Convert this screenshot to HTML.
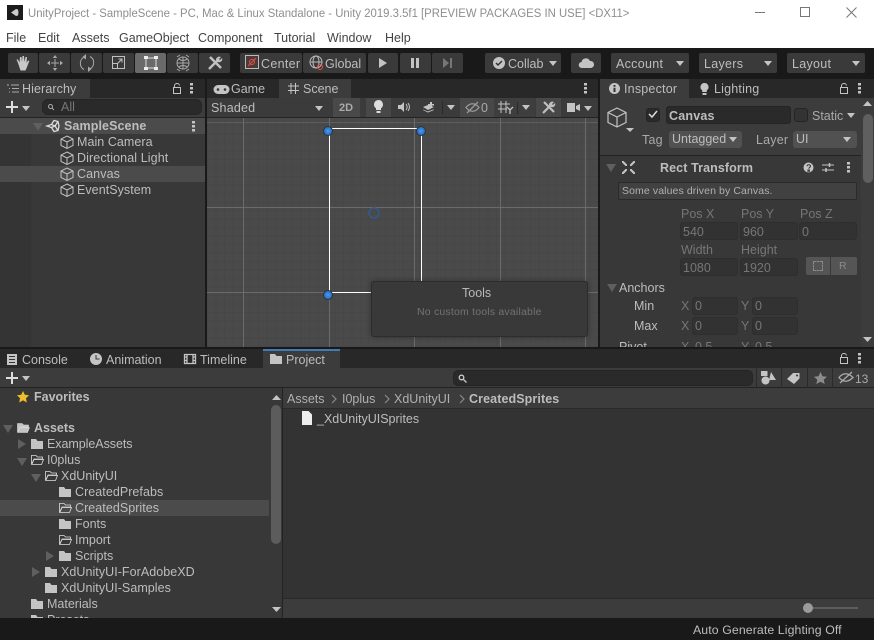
<!DOCTYPE html>
<html><head><meta charset="utf-8"><style>
*{box-sizing:border-box}
html,body{margin:0;padding:0;background:#191919}
body{width:874px;height:640px;position:relative;overflow:hidden;font-family:"Liberation Sans",sans-serif;font-size:12.5px;color:#bdbdbd}
.a{position:absolute}
.t{position:absolute;white-space:nowrap;line-height:16px;height:16px}
.b{font-weight:bold}
.btn{position:absolute;background:#3a3a3a;height:20px;top:53px;border-radius:2px}
.f{position:absolute;background:#2a2a2a;border-radius:3px;border:1px solid #252525}
.d{background:#323232;border-color:#2e2e2e}
.tri{position:absolute;width:0;height:0;border-left:4px solid transparent;border-right:4px solid transparent;border-top:5px solid #c4c4c4}
.trid{position:absolute;width:0;height:0;border-left:5px solid transparent;border-right:5px solid transparent;border-top:8px solid #5f5f5f}
.trir{position:absolute;width:0;height:0;border-top:5px solid transparent;border-bottom:5px solid transparent;border-left:8px solid #5f5f5f}
svg{position:absolute;overflow:visible}
.g{position:absolute;background:#6b6b6b}
.dis{color:#767676}
</style></head><body>
<!-- title bar -->
<div class="a" style="left:0;top:0;width:874px;height:48px;background:#fff"></div>
<div class="a" style="left:7px;top:5px;width:16px;height:15px;background:#1c1c1c"></div>
<svg style="left:7px;top:5px" width="16" height="15"><path d="M4 7.500 9 4l2 .5.500 3-.5 3L9 11z" fill="#ccc"/></svg>
<div class="t" style="left:28px;top:5px;color:#8e8e8e;font-size:12.3px;transform:scaleX(.923);transform-origin:0 50%">UnityProject - SampleScene - PC, Mac &amp; Linux Standalone - Unity 2019.3.5f1 [PREVIEW PACKAGES IN USE] &lt;DX11&gt;</div>
<div class="a" style="left:755px;top:12px;width:10px;height:1px;background:#777"></div>
<div class="a" style="left:800px;top:7px;width:10px;height:10px;border:1px solid #777"></div>
<svg style="left:846px;top:7px" width="11" height="11"><path d="M.5.500l10 10M10.500.5l-10 10" stroke="#777" fill="none"/></svg>
<div class="t" style="left:6px;top:30px;color:#444">File</div>
<div class="t" style="left:38px;top:30px;color:#444">Edit</div>
<div class="t" style="left:72px;top:30px;color:#444">Assets</div>
<div class="t" style="left:119px;top:30px;color:#444">GameObject</div>
<div class="t" style="left:198px;top:30px;color:#444">Component</div>
<div class="t" style="left:274px;top:30px;color:#444">Tutorial</div>
<div class="t" style="left:327px;top:30px;color:#444">Window</div>
<div class="t" style="left:385px;top:30px;color:#444">Help</div>
<!-- toolbar -->
<div class="btn" style="left:8px;width:30px"></div>
<div class="btn" style="left:39px;width:31px"></div>
<div class="btn" style="left:71px;width:31px"></div>
<div class="btn" style="left:103px;width:31px"></div>
<div class="btn" style="left:135px;width:31px;background:#6a6a6a"></div>
<div class="btn" style="left:167px;width:31px"></div>
<div class="btn" style="left:199px;width:31px"></div>
<svg style="left:14px;top:55px" width="18" height="16"><path d="M4 8 2.500 4.500l1.500 0 1.500 3L6 2h1.500l.5 5 .5-6H10l.5 6 1-5H13l-.5 6 1.500-2.500 1.300.5-2.300 6-1.500 3.500H6.500z" fill="#c8c8c8"/></svg>
<svg style="left:47px;top:55px" width="16" height="16" stroke="#a8a8a8" fill="none"><path d="M8 4v8M4 8h8"/><path d="M8 0 5.800 3h4.400zM8 16l-2.200-3h4.400zM0 8l3-2.200v4.400zM16 8l-3-2.200v4.400z" fill="#a8a8a8" stroke="none"/></svg>
<svg style="left:79px;top:54px" width="16" height="18" stroke="#a8a8a8" fill="none"><path d="M6 2.500C0 5 0 13 5 15.500M10 15.500C16 13 16 5 11 2.500"/><path d="M7 0v5.500L3.500 3zM9 18v-5.500l3.500 2.500z" fill="#a8a8a8" stroke="none"/></svg>
<svg style="left:111px;top:55px" width="16" height="16" stroke="#c0c0c0" fill="none"><rect x="1.500" y="1.500" width="12" height="12"/><rect x="1.500" y="8.500" width="5" height="5"/><path d="M6 9l5-5M7.500 4H11v3.500"/></svg>
<svg style="left:143px;top:55px" width="16" height="16"><rect x="3" y="3" width="10" height="10" stroke="#ddd" fill="none"/><path d="M1 1h4v3H1zM11 1h4v3h-4zM1 12h4v3H1zM11 12h4v3h-4z" fill="#eee"/></svg>
<svg style="left:175px;top:54px" width="16" height="18" stroke="#a8a8a8" fill="none"><circle cx="8" cy="9" r="6"/><path d="M2 9h12M8 3v12M4 5c2 2 6 2 8 0M4 13c2-2 6-2 8 0"/><path d="M2 3 5 1M14 3l-3-2M2 15l3 2M14 15l-3 2"/></svg>
<svg style="left:207px;top:55px" width="16" height="16"><path d="M2 14 11 5M3 2l11 11" stroke="#c0c0c0" stroke-width="2.500" fill="none"/><path d="M9 5c0-3 3-4 5-3l-2 2 1 1 2-2c1 2-1 5-4 4z" fill="#c0c0c0"/></svg>
<div class="btn" style="left:240px;width:62px"></div>
<div class="btn" style="left:303px;width:63px"></div>
<svg style="left:245px;top:55px" width="15" height="15"><rect x=".5" y=".5" width="13" height="13" stroke="#bbb" fill="#4a3a3a"/><path d="M3 11 11 3" stroke="#e35040" fill="none"/><circle cx="7" cy="7" r="2.500" stroke="#e35040" fill="none"/></svg>
<div class="t" style="left:261px;top:56px;letter-spacing:.3px">Center</div>
<svg style="left:309px;top:55px" width="16" height="16" stroke="#bbb" fill="none"><circle cx="7" cy="7" r="6"/><ellipse cx="7" cy="7" rx="3" ry="6"/><path d="M1 7h12"/><circle cx="11" cy="12" r="2.500" stroke="#e35040"/></svg>
<div class="t" style="left:325px;top:56px">Global</div>
<div class="btn" style="left:368px;width:30px"></div>
<div class="btn" style="left:400px;width:31px"></div>
<div class="btn" style="left:432px;width:31px"></div>
<svg style="left:378px;top:57px" width="10" height="12"><path d="M1 1v10l8-5z" fill="#c4c4c4"/></svg>
<div class="a" style="left:411px;top:58px;width:3px;height:10px;background:#c4c4c4"></div>
<div class="a" style="left:416px;top:58px;width:3px;height:10px;background:#c4c4c4"></div>
<svg style="left:442px;top:58px" width="11" height="10"><path d="M1 0v10l6-5z M8 0h2v10H8z" fill="#777"/></svg>
<div class="btn" style="left:485px;width:76px"></div>
<svg style="left:493px;top:57px" width="12" height="12"><circle cx="6" cy="6" r="6" fill="#c4c4c4"/><path d="M3 6l2 2 4-4" stroke="#333" stroke-width="1.500" fill="none"/></svg>
<div class="t" style="left:508px;top:56px">Collab</div>
<div class="tri" style="left:549px;top:61px"></div>
<div class="btn" style="left:571px;width:30px"></div>
<svg style="left:579px;top:57px" width="15" height="11"><path d="M3 11a3 3 0 0 1-.5-6A4.500 4.500 0 0 1 11 4a3.500 3.500 0 0 1 1 7z" fill="#c4c4c4"/></svg>
<div class="btn" style="left:611px;width:78px"></div>
<div class="t" style="left:616px;top:56px;letter-spacing:.3px">Account</div>
<div class="tri" style="left:676px;top:61px"></div>
<div class="btn" style="left:699px;width:78px"></div>
<div class="t" style="left:704px;top:56px;letter-spacing:.3px">Layers</div>
<div class="tri" style="left:764px;top:61px"></div>
<div class="btn" style="left:787px;width:78px"></div>
<div class="t" style="left:792px;top:56px;letter-spacing:.3px">Layout</div>
<div class="tri" style="left:852px;top:61px"></div>

<!-- Hierarchy -->
<div class="a" style="left:0;top:79px;width:205px;height:268px;background:#383838"></div>
<div class="a" style="left:0;top:79px;width:205px;height:19px;background:#282828"></div>
<div class="a" style="left:0;top:79px;width:90px;height:19px;background:#3c3c3c"></div>
<svg style="left:7px;top:84px" width="12" height="10" stroke="#aaa" fill="none"><path d="M0 1h2M4 1h8M2 4.500h1M5 4.500h7M2 8h1M5 8h7"/></svg>
<div class="t" style="left:22px;top:81px;letter-spacing:.1px">Hierarchy</div>
<svg style="left:172px;top:83px" width="10" height="11" stroke="#c4c4c4" fill="none"><rect x="1.500" y="4.500" width="7" height="6"/><path d="M2.500 4.500V2.500a2.500 2 0 0 1 5 0"/></svg>
<svg style="left:190px;top:83px" width="3" height="10"><path d="M0 0h3v2.500H0zM0 4h3v2.500H0zM0 8h3v2.500H0z" fill="#c4c4c4"/></svg>
<div class="a" style="left:0;top:98px;width:205px;height:20px;background:#3c3c3c;border-bottom:1px solid #232323"></div>
<svg style="left:6px;top:101px" width="12" height="12"><path d="M5 0h2v5h5v2H7v5H5V7H0V5h5z" fill="#ddd"/></svg>
<div class="tri" style="left:22px;top:106px"></div>
<div class="f" style="left:42px;top:99px;width:160px;height:16px;border-radius:6px"></div>
<svg style="left:47px;top:103px" width="10" height="9" stroke="#aaa" fill="none"><circle cx="3.500" cy="3.500" r="2"/><path d="M5 5l2 2"/></svg>
<div class="t dis" style="left:61px;top:99px">All</div>
<div class="a" style="left:0;top:134px;width:31px;height:213px;background:#343434"></div>
<div class="a" style="left:0;top:118px;width:205px;height:16px;background:#4b4b4b"></div>
<div class="a" style="left:0;top:166px;width:205px;height:16px;background:#4b4b4b"></div>
<div class="trid" style="left:33px;top:123px"></div>
<svg style="left:46px;top:119px" width="14" height="14" stroke="#ddd" fill="none" stroke-width="1.300"><path d="M1 7l4.500-1.500L8 1.500 12 2.500l1 4.500-1 4.500-4 1L5.500 8.500zM5.500 5.500 9 7l-3.500 1.500M9 7l3-4.500M9 7l3 4.500"/></svg>
<div class="t b" style="left:64px;top:118px;letter-spacing:.1px">SampleScene</div>
<svg style="left:192px;top:121px" width="3" height="10"><path d="M0 0h3v2.500H0zM0 4h3v2.500H0zM0 8h3v2.500H0z" fill="#c4c4c4"/></svg>
<svg style="left:60px;top:135px" width="14" height="14" stroke="#c4c4c4" fill="none"><path d="M7 1 13 4v6.500L7 13.500 1 10.500V4zM1 4l6 3 6-3M7 7v6.500"/></svg>
<svg style="left:60px;top:151px" width="14" height="14" stroke="#c4c4c4" fill="none"><path d="M7 1 13 4v6.500L7 13.500 1 10.500V4zM1 4l6 3 6-3M7 7v6.500"/></svg>
<svg style="left:60px;top:167px" width="14" height="14" stroke="#c4c4c4" fill="none"><path d="M7 1 13 4v6.500L7 13.500 1 10.500V4zM1 4l6 3 6-3M7 7v6.500"/></svg>
<svg style="left:60px;top:183px" width="14" height="14" stroke="#c4c4c4" fill="none"><path d="M7 1 13 4v6.500L7 13.500 1 10.500V4zM1 4l6 3 6-3M7 7v6.500"/></svg>
<div class="t" style="left:77px;top:134px;letter-spacing:.05px">Main Camera</div>
<div class="t" style="left:77px;top:150px;letter-spacing:.1px">Directional Light</div>
<div class="t" style="left:77px;top:166px;letter-spacing:.1px">Canvas</div>
<div class="t" style="left:77px;top:182px;letter-spacing:.05px">EventSystem</div>

<!-- Scene tabs -->
<div class="a" style="left:207px;top:79px;width:391px;height:19px;background:#282828"></div>
<div class="a" style="left:279px;top:79px;width:72px;height:19px;background:#3c3c3c"></div>
<svg style="left:214px;top:85px" width="15" height="9"><path d="M4 0h7a4 4 0 0 1 0 9H4a4 4 0 0 1 0-9z" fill="#c4c4c4"/><circle cx="4" cy="4.500" r="1.300" fill="#333"/><circle cx="11" cy="4.500" r="1.300" fill="#333"/></svg>
<div class="t" style="left:231px;top:81px">Game</div>
<svg style="left:288px;top:83px" width="11" height="11" stroke="#c4c4c4" fill="none"><path d="M3 0v11M7.500 0v11M0 3h11M0 7.500h11"/></svg>
<div class="t" style="left:303px;top:81px">Scene</div>
<svg style="left:584px;top:83px" width="3" height="10"><path d="M0 0h3v2.500H0zM0 4h3v2.500H0zM0 8h3v2.500H0z" fill="#c4c4c4"/></svg>
<div class="a" style="left:207px;top:98px;width:391px;height:20px;background:#3b3b3b;border-bottom:1px solid #232323"></div>
<div class="t" style="left:211px;top:100px;letter-spacing:.2px">Shaded</div>
<div class="tri" style="left:315px;top:106px"></div>
<div class="a" style="left:333px;top:98px;width:27px;height:19px;background:#494949"></div>
<div class="t b" style="left:339px;top:100px;font-size:11px;color:#aaa">2D</div>
<div class="a" style="left:366px;top:98px;width:25px;height:19px;background:#484848"></div>
<svg style="left:373px;top:100px" width="11" height="14"><path d="M5.500 0a4.500 4.500 0 0 1 2.500 8.200V10H3V8.200A4.500 4.500 0 0 1 5.500 0zM3.500 11h4v2h-4z" fill="#ddd"/></svg>
<svg style="left:398px;top:102px" width="13" height="10" fill="#c4c4c4"><path d="M0 3h3l3-3v10L3 7H0z"/><path d="M8 2c1.500 2 1.500 4 0 6M10 1c2 3 2 5 0 8" stroke="#c4c4c4" fill="none"/></svg>
<svg style="left:422px;top:102px" width="13" height="11" fill="#c4c4c4"><path d="M1 5l5-2 6 2-6 3zM1 8l5 2.500 6-2.500-1-.5-5 2-5-2z"/><path d="M8 0h2v2h2v1.500h-2V5H8V3.500H6V2h2z"/></svg>
<div class="a" style="left:442px;top:101px;width:1px;height:13px;background:#2a2a2a"></div>
<div class="tri" style="left:447px;top:105px"></div>
<div class="a" style="left:460px;top:98px;width:34px;height:19px;background:#484848"></div>
<svg style="left:465px;top:101px" width="15" height="13" stroke="#999" fill="none"><path d="M1 6.500C5 1.500 10 1.500 14 6.500 10 11.500 5 11.500 1 6.500zM2 12 13 1" stroke-width="1.300"/></svg>
<div class="t" style="left:481px;top:100px;color:#aaa">0</div>
<div class="a" style="left:494px;top:98px;width:41px;height:19px;background:#3e3e3e"></div>
<svg style="left:498px;top:101px" width="17" height="14" stroke="#c4c4c4" fill="none"><path d="M3 0v12M8 0v12M0 3h12M0 8h9"/><path d="M9 6l3 3 3-3M12 9v4" stroke-width="1.300"/></svg>
<div class="a" style="left:517px;top:102px;width:1px;height:12px;background:#2a2a2a"></div>
<div class="tri" style="left:522px;top:105px"></div>
<div class="a" style="left:536px;top:98px;width:25px;height:19px;background:#484848"></div>
<svg style="left:541px;top:100px" width="15" height="15"><path d="M2 13 10 5M3 2l10 10" stroke="#c0c0c0" stroke-width="2.200" fill="none"/><path d="M8 5c0-3 3-4 5-3l-2 2 1 1 2-2c1 2-1 5-4 4z" fill="#c0c0c0"/></svg>
<svg style="left:567px;top:103px" width="13" height="9"><path d="M0 0h8v9H0zM9 3l4-2v7L9 6z" fill="#c4c4c4"/></svg>
<div class="tri" style="left:584px;top:106px"></div>

<!-- Scene view -->
<div class="a" style="left:207px;top:118px;width:391px;height:229px;background-color:#4a4a4a;background-image:repeating-linear-gradient(90deg,#474747 0 1px,transparent 1px 8.5px),repeating-linear-gradient(0deg,#474747 0 1px,transparent 1px 8.5px)"></div>
<div class="g" style="left:207px;top:122px;width:391px;height:1px;background:#5d5d5d"></div>
<div class="g" style="left:207px;top:207px;width:391px;height:1px"></div>
<div class="g" style="left:207px;top:292px;width:391px;height:1px"></div>
<div class="g" style="left:243px;top:118px;width:1px;height:229px"></div>
<div class="g" style="left:329px;top:118px;width:1px;height:229px"></div>
<div class="g" style="left:414px;top:118px;width:1px;height:229px"></div>
<div class="g" style="left:500px;top:118px;width:1px;height:229px"></div>
<div class="g" style="left:585px;top:118px;width:1px;height:229px"></div>
<div class="a" style="left:329px;top:128px;width:93px;height:165px;border:1px solid #fff"></div>
<svg style="left:321px;top:124px" width="110" height="178"><defs><radialGradient id="h"><stop offset="0" stop-color="#4a9cf0"/><stop offset="1" stop-color="#1f68c0"/></radialGradient></defs>
<circle cx="7" cy="7" r="4.500" fill="url(#h)" stroke="#333"/><circle cx="100" cy="7" r="4.500" fill="url(#h)" stroke="#333"/><circle cx="7" cy="171" r="4.500" fill="url(#h)" stroke="#333"/></svg>
<svg style="left:367px;top:206px" width="14" height="14"><circle cx="7" cy="7" r="5" stroke="#34598a" stroke-width="1.600" fill="none"/></svg>
<div class="a" style="left:371px;top:281px;width:217px;height:56px;background:#393939;border:1px solid #2c2c2c;border-radius:3px;box-shadow:0 0 6px rgba(0,0,0,.3)"></div>
<div class="t" style="left:462px;top:285px;color:#b8b8b8">Tools</div>
<div class="t" style="left:417px;top:304px;font-size:10.500px;color:#737373;letter-spacing:.2px">No custom tools available</div>

<!-- Inspector -->
<div class="a" style="left:600px;top:79px;width:274px;height:268px;background:#383838"></div>
<div class="a" style="left:600px;top:79px;width:274px;height:19px;background:#282828"></div>
<div class="a" style="left:600px;top:79px;width:89px;height:19px;background:#3c3c3c"></div>
<svg style="left:609px;top:83px" width="11" height="11"><circle cx="5.500" cy="5.500" r="5.500" fill="#c4c4c4"/><path d="M4.500 2h2v1.800h-2zM4.500 4.800h2V9h-2z" fill="#333"/></svg>
<div class="t" style="left:624px;top:81px;letter-spacing:.2px">Inspector</div>
<svg style="left:700px;top:83px" width="9" height="12"><path d="M4.500 0a4 4 0 0 1 2.300 7.300V9H2.200V7.300A4 4 0 0 1 4.500 0zM2.500 10h4v2h-4z" fill="#c4c4c4"/></svg>
<div class="t" style="left:714px;top:81px;letter-spacing:.2px">Lighting</div>
<svg style="left:839px;top:83px" width="10" height="11" stroke="#c4c4c4" fill="none"><rect x="1.500" y="4.500" width="7" height="6"/><path d="M2.500 4.500V2.500a2.500 2 0 0 1 5 0"/></svg>
<svg style="left:858px;top:83px" width="3" height="10"><path d="M0 0h3v2.500H0zM0 4h3v2.500H0zM0 8h3v2.500H0z" fill="#c4c4c4"/></svg>
<div class="a" style="left:600px;top:98px;width:261px;height:58px;background:#3c3c3c;border-bottom:1px solid #232323"></div>
<svg style="left:607px;top:107px" width="22" height="24" stroke="#c4c4c4" stroke-width="1.200" fill="none"><path d="M10 1 19 5.500v10L10 20 1 15.500v-10zM1 5.500l9 4.500 9-4.500M10 10v10"/></svg>
<div class="tri" style="left:626px;top:128px;border-width:4px 4px 0;border-top-color:#c4c4c4"></div>
<div class="f" style="left:646px;top:108px;width:14px;height:14px"></div>
<svg style="left:648px;top:110px" width="10" height="9"><path d="M1 4l3 3 5-6" stroke="#ddd" stroke-width="1.500" fill="none"/></svg>
<div class="f" style="left:666px;top:106px;width:125px;height:18px"></div>
<div class="t b" style="left:669px;top:108px;letter-spacing:.2px">Canvas</div>
<div class="f" style="left:794px;top:108px;width:14px;height:14px;background:#333"></div>
<div class="t" style="left:812px;top:108px;color:#aaa">Static</div>
<div class="tri" style="left:847px;top:113px"></div>
<div class="t" style="left:642px;top:132px;color:#aaa;letter-spacing:.2px">Tag</div>
<div class="a" style="left:669px;top:131px;width:73px;height:17px;background:#515151;border-radius:3px"></div>
<div class="t" style="left:672px;top:131px">Untagged</div>
<div class="tri" style="left:729px;top:137px"></div>
<div class="t" style="left:756px;top:132px;color:#aaa;letter-spacing:.2px">Layer</div>
<div class="a" style="left:793px;top:131px;width:64px;height:17px;background:#515151;border-radius:3px"></div>
<div class="t" style="left:796px;top:131px">UI</div>
<div class="tri" style="left:843px;top:137px"></div>
<div class="trid" style="left:606px;top:164px"></div>
<svg style="left:622px;top:161px" width="13" height="13"><path d="M0 0l1.500 0 3.500 3.500V5H3.500L0 1.500zM13 0h-1.500L8 3.500V5h1.500L13 1.500zM0 13h1.500L5 9.500V8H3.500L0 11.500zM13 13h-1.500L8 9.500V8h1.500L13 11.500z" fill="#c4c4c4"/></svg>
<div class="t b" style="left:660px;top:160px;letter-spacing:.1px">Rect Transform</div>
<svg style="left:803px;top:162px" width="11" height="11"><circle cx="5.500" cy="5.500" r="5" fill="#c4c4c4"/><path d="M4 4.200c0-2 3.500-2 3.500 0 0 1.300-1.700 1.200-1.700 2.500M4.900 8h1.500v1.300H4.900z" stroke="#333" fill="none"/></svg>
<svg style="left:822px;top:162px" width="12" height="11" stroke="#c4c4c4" fill="none"><path d="M0 3h12M0 8h12"/><path d="M7.500 1v4M4 6v4" stroke-width="1.500"/></svg>
<svg style="left:847px;top:162px" width="3" height="10"><path d="M0 0h3v2.500H0zM0 4h3v2.500H0zM0 8h3v2.500H0z" fill="#c4c4c4"/></svg>
<div class="a" style="left:618px;top:182px;width:239px;height:18px;background:#414141;border:1px solid #2a2a2a;border-radius:2px"></div>
<div class="t" style="left:622px;top:183px;font-size:10.500px;color:#b0b0b0;letter-spacing:.1px">Some values driven by Canvas.</div>
<div class="t dis" style="left:681px;top:206px">Pos X</div>
<div class="t dis" style="left:741px;top:206px">Pos Y</div>
<div class="t dis" style="left:800px;top:206px">Pos Z</div>
<div class="f d" style="left:680px;top:222px;width:58px;height:18px"></div>
<div class="f d" style="left:740px;top:222px;width:58px;height:18px"></div>
<div class="f d" style="left:799px;top:222px;width:58px;height:18px"></div>
<div class="t dis" style="left:683px;top:224px">540</div>
<div class="t dis" style="left:743px;top:224px">960</div>
<div class="t dis" style="left:802px;top:224px">0</div>
<div class="t dis" style="left:681px;top:242px">Width</div>
<div class="t dis" style="left:741px;top:242px">Height</div>
<div class="f d" style="left:680px;top:258px;width:58px;height:18px"></div>
<div class="f d" style="left:740px;top:258px;width:58px;height:18px"></div>
<div class="t dis" style="left:683px;top:260px">1080</div>
<div class="t dis" style="left:743px;top:260px">1920</div>
<div class="a" style="left:806px;top:257px;width:24px;height:18px;background:#555;border-radius:2px 0 0 2px"></div>
<div class="a" style="left:813px;top:261px;width:10px;height:10px;border:1px dashed #8a8a8a"></div>
<div class="a" style="left:831px;top:257px;width:26px;height:18px;background:#555;border-radius:0 2px 2px 0"></div>
<div class="t" style="left:839px;top:258px;font-size:10.500px;color:#8a8a8a">R</div>
<div class="trid" style="left:607px;top:284px"></div>
<div class="t" style="left:619px;top:280px">Anchors</div>
<div class="t" style="left:634px;top:298px">Min</div>
<div class="t" style="left:634px;top:318px">Max</div>
<div class="t dis" style="left:681px;top:298px">X</div><div class="t dis" style="left:741px;top:298px">Y</div>
<div class="t dis" style="left:681px;top:318px">X</div><div class="t dis" style="left:741px;top:318px">Y</div>
<div class="f d" style="left:692px;top:297px;width:46px;height:18px"></div>
<div class="f d" style="left:752px;top:297px;width:46px;height:18px"></div>
<div class="f d" style="left:692px;top:317px;width:46px;height:18px"></div>
<div class="f d" style="left:752px;top:317px;width:46px;height:18px"></div>
<div class="t dis" style="left:695px;top:298px">0</div><div class="t dis" style="left:755px;top:298px">0</div>
<div class="t dis" style="left:695px;top:318px">0</div><div class="t dis" style="left:755px;top:318px">0</div>
<div class="a" style="left:600px;top:339px;width:261px;height:8px;overflow:hidden">
<div class="t" style="left:19px;top:0">Pivot</div>
<div class="t dis" style="left:81px;top:0">X</div><div class="t dis" style="left:95px;top:0">0.5</div><div class="t dis" style="left:141px;top:0">Y</div><div class="t dis" style="left:155px;top:0">0.5</div>
</div>
<div class="a" style="left:861px;top:98px;width:13px;height:249px;background:#3c3c3c"></div>
<svg style="left:863px;top:101px" width="9" height="5"><path d="M0 5l4.500-5L9 5z" fill="#c4c4c4"/></svg>
<svg style="left:863px;top:337px" width="9" height="5"><path d="M0 0l4.500 5L9 0z" fill="#c4c4c4"/></svg>
<div class="a" style="left:863px;top:114px;width:10px;height:69px;background:#5f5f5f;border-radius:5px"></div>

<!-- Bottom panel -->
<div class="a" style="left:0;top:349px;width:874px;height:269px;background:#383838"></div>
<div class="a" style="left:0;top:349px;width:874px;height:19px;background:#282828"></div>
<div class="a" style="left:263px;top:349px;width:77px;height:19px;background:#3c3c3c;border-top:2px solid #3f7cb6"></div>
<svg style="left:7px;top:354px" width="10" height="11"><path d="M0 0h10v11H0z" fill="#c4c4c4"/><path d="M2 2.500h6M2 5.500h6M2 8.500h6" stroke="#333"/></svg>
<div class="t" style="left:22px;top:352px">Console</div>
<svg style="left:90px;top:353px" width="12" height="12"><circle cx="6" cy="6" r="6" fill="#c4c4c4"/><path d="M6 2v4h3.500" stroke="#333" fill="none"/></svg>
<div class="t" style="left:106px;top:352px">Animation</div>
<svg style="left:184px;top:354px" width="12" height="10" stroke="#c4c4c4" fill="none" stroke-width="1.300"><path d="M.5.500h11v9H.5zM3 .5v9M9 .5v9M.5 3H3M.5 6.500H3M9 3h2.500M9 6.500h2.500"/></svg>
<div class="t" style="left:200px;top:352px">Timeline</div>
<svg style="left:270px;top:354px" width="12" height="10"><path d="M0 0h5l1.500 2H12v8H0z" fill="#c4c4c4"/></svg>
<div class="t" style="left:286px;top:352px">Project</div>
<svg style="left:839px;top:353px" width="10" height="11" stroke="#c4c4c4" fill="none"><rect x="1.500" y="4.500" width="7" height="6"/><path d="M2.500 4.500V2.500a2.500 2 0 0 1 5 0"/></svg>
<svg style="left:858px;top:353px" width="3" height="10"><path d="M0 0h3v2.500H0zM0 4h3v2.500H0zM0 8h3v2.500H0z" fill="#c4c4c4"/></svg>
<div class="a" style="left:0;top:368px;width:874px;height:20px;background:#3c3c3c;border-bottom:1px solid #232323"></div>
<svg style="left:6px;top:372px" width="12" height="12"><path d="M5 0h2v5h5v2H7v5H5V7H0V5h5z" fill="#ddd"/></svg>
<div class="tri" style="left:22px;top:376px"></div>
<div class="f" style="left:453px;top:370px;width:300px;height:16px;border-radius:5px"></div>
<svg style="left:458px;top:374px" width="9" height="9" stroke="#ccc" fill="none" stroke-width="1.300"><circle cx="3.500" cy="3.500" r="2.300"/><path d="M5.500 5.500l3 3"/></svg>
<div class="a" style="left:756px;top:368px;width:1px;height:20px;background:#2a2a2a"></div>
<div class="a" style="left:781px;top:368px;width:1px;height:20px;background:#2a2a2a"></div>
<div class="a" style="left:807px;top:368px;width:1px;height:20px;background:#2a2a2a"></div>
<div class="a" style="left:832px;top:368px;width:1px;height:20px;background:#2a2a2a"></div>
<svg style="left:761px;top:371px" width="15" height="14"><circle cx="4.500" cy="9.500" r="4" fill="#c4c4c4"/><path d="M0 0h6.500v5H0zM10 1l5 8H8z" fill="#c4c4c4"/></svg>
<svg style="left:787px;top:372px" width="14" height="12"><path d="M0 7 6 1h6.500v5.500L7 12z" fill="#c4c4c4"/><circle cx="10" cy="3.500" r="1" fill="#333"/></svg>
<svg style="left:814px;top:372px" width="13" height="12"><path d="M6.500 0l2 4.200 4.500.5-3.300 3 1 4.300-4.200-2.300L2.300 12l1-4.300L0 4.700l4.500-.5z" fill="#8c8c8c"/></svg>
<svg style="left:838px;top:371px" width="16" height="13" stroke="#aaa" fill="none"><path d="M1 6.500C5 1.500 10 1.500 15 6.500 10 11.500 5 11.500 1 6.500zM2 12 14 1" stroke-width="1.300"/></svg>
<div class="t" style="left:855px;top:371px;color:#aaa;font-size:12px">13</div>

<!-- Project tree -->
<svg style="left:17px;top:391px" width="12" height="12"><path d="M6 0l1.800 3.800 4.200.5-3 2.900.8 4.300L6 9.400 2.200 11.500 3 7.200 0 4.300l4.200-.5z" fill="#eebd2b"/></svg>
<div class="t b" style="left:34px;top:389px">Favorites</div>
<div class="trid" style="left:3px;top:425px"></div>
<div class="t b" style="left:34px;top:420px">Assets</div>
<div class="a" style="left:0;top:500px;width:269px;height:16px;background:#4b4b4b"></div>
<svg style="left:17px;top:423px" width="13" height="10"><path d="M.5.500h4.500l1.500 1.500h5v2H3L.5 9.500zM3 4.500h9.500L10.500 9.500H.8z" stroke="#ddd" fill="#c4c4c4" stroke-width=".6"/></svg>
<div class="trir" style="left:18px;top:439px"></div>
<svg style="left:31px;top:439px" width="12" height="10"><path d="M0 0h5l1.500 2H12v8H0z" fill="#c4c4c4"/></svg>
<div class="t" style="left:47px;top:436px;letter-spacing:-.05px">ExampleAssets</div>
<div class="trid" style="left:17px;top:458px"></div>
<svg style="left:31px;top:455px" width="13" height="10"><path d="M.5.500h4.500l1.500 1.500h5v2H3L.5 9.500zM3 4.500h9.500L10.500 9.500H.8z" stroke="#ddd" fill="#383838" stroke-width=".8"/></svg>
<div class="t" style="left:47px;top:452px">I0plus</div>
<div class="trid" style="left:31px;top:474px"></div>
<svg style="left:45px;top:471px" width="13" height="10"><path d="M.5.500h4.500l1.500 1.500h5v2H3L.5 9.500zM3 4.500h9.500L10.500 9.500H.8z" stroke="#ddd" fill="#383838" stroke-width=".8"/></svg>
<div class="t" style="left:61px;top:468px">XdUnityUI</div>
<svg style="left:59px;top:487px" width="12" height="10"><path d="M0 0h5l1.500 2H12v8H0z" fill="#c4c4c4"/></svg>
<div class="t" style="left:75px;top:484px;letter-spacing:.05px">CreatedPrefabs</div>
<svg style="left:59px;top:503px" width="13" height="10"><path d="M.5.500h4.500l1.500 1.500h5v2H3L.5 9.500zM3 4.500h9.500L10.500 9.500H.8z" stroke="#ddd" fill="#4b4b4b" stroke-width=".8"/></svg>
<div class="t" style="left:75px;top:500px;letter-spacing:.05px">CreatedSprites</div>
<svg style="left:59px;top:519px" width="12" height="10"><path d="M0 0h5l1.500 2H12v8H0z" fill="#c4c4c4"/></svg>
<div class="t" style="left:75px;top:516px">Fonts</div>
<svg style="left:59px;top:535px" width="13" height="10"><path d="M.5.500h4.500l1.500 1.500h5v2H3L.5 9.500zM3 4.500h9.500L10.500 9.500H.8z" stroke="#ddd" fill="#383838" stroke-width=".8"/></svg>
<div class="t" style="left:75px;top:532px">Import</div>
<div class="trir" style="left:46px;top:551px"></div>
<svg style="left:59px;top:551px" width="12" height="10"><path d="M0 0h5l1.500 2H12v8H0z" fill="#c4c4c4"/></svg>
<div class="t" style="left:75px;top:548px">Scripts</div>
<div class="trir" style="left:32px;top:567px"></div>
<svg style="left:45px;top:567px" width="12" height="10"><path d="M0 0h5l1.500 2H12v8H0z" fill="#c4c4c4"/></svg>
<div class="t" style="left:61px;top:564px;letter-spacing:.05px">XdUnityUI-ForAdobeXD</div>
<svg style="left:45px;top:583px" width="12" height="10"><path d="M0 0h5l1.500 2H12v8H0z" fill="#c4c4c4"/></svg>
<div class="t" style="left:61px;top:580px;letter-spacing:.05px">XdUnityUI-Samples</div>
<svg style="left:31px;top:599px" width="12" height="10"><path d="M0 0h5l1.500 2H12v8H0z" fill="#c4c4c4"/></svg>
<div class="t" style="left:47px;top:596px">Materials</div>
<div class="a" style="left:0;top:612px;width:282px;height:6px;overflow:hidden">
<svg style="left:31px;top:3px" width="12" height="10"><path d="M0 0h5l1.500 2H12v8H0z" fill="#c4c4c4"/></svg>
<div class="t" style="left:47px;top:0">Presets</div>
</div>
<div class="a" style="left:271px;top:405px;width:10px;height:139px;background:#5c5c5c;border-radius:5px"></div>
<svg style="left:272px;top:395px" width="9" height="5"><path d="M0 5l4.500-5L9 5z" fill="#c4c4c4"/></svg>
<svg style="left:272px;top:607px" width="9" height="5"><path d="M0 0l4.500 5L9 0z" fill="#c4c4c4"/></svg>
<div class="a" style="left:282px;top:388px;width:1px;height:230px;background:#232323"></div>
<div class="a" style="left:283px;top:388px;width:591px;height:21px;background:#3c3c3c;border-bottom:1px solid #2a2a2a"></div>
<div class="a" style="left:283px;top:409px;width:591px;height:189px;background:#333"></div>
<div class="t" style="left:287px;top:391px;color:#b0b0b0">Assets</div>
<svg style="left:331px;top:394px" width="6" height="10"><path d="M1 1l4 4-4 4" stroke="#8a8a8a" stroke-width="1.200" fill="none"/></svg>
<div class="t" style="left:342px;top:391px;color:#b0b0b0">I0plus</div>
<svg style="left:384px;top:394px" width="6" height="10"><path d="M1 1l4 4-4 4" stroke="#8a8a8a" stroke-width="1.200" fill="none"/></svg>
<div class="t" style="left:394px;top:391px;color:#b0b0b0">XdUnityUI</div>
<svg style="left:459px;top:394px" width="6" height="10"><path d="M1 1l4 4-4 4" stroke="#8a8a8a" stroke-width="1.200" fill="none"/></svg>
<div class="t b" style="left:469px;top:391px;letter-spacing:.1px">CreatedSprites</div>
<svg style="left:302px;top:411px" width="10" height="14"><path d="M0 0h6.500L10 3.500V14H0z" fill="#eee"/></svg>
<div class="t" style="left:317px;top:411px">_XdUnityUISprites</div>
<div class="a" style="left:283px;top:598px;width:591px;height:20px;background:#3c3c3c;border-top:1px solid #2a2a2a"></div>
<div class="a" style="left:808px;top:607px;width:50px;height:2px;background:#5c5c5c"></div>
<div class="a" style="left:803px;top:603px;width:10px;height:10px;background:#9b9b9b;border-radius:50%"></div>
<!-- status -->
<div class="a" style="left:0;top:618px;width:874px;height:22px;background:#191919"></div>
<div class="t" style="left:693px;top:622px;color:#bdbdbd;font-size:12.3px;letter-spacing:.1px">Auto Generate Lighting Off</div>
</body></html>
